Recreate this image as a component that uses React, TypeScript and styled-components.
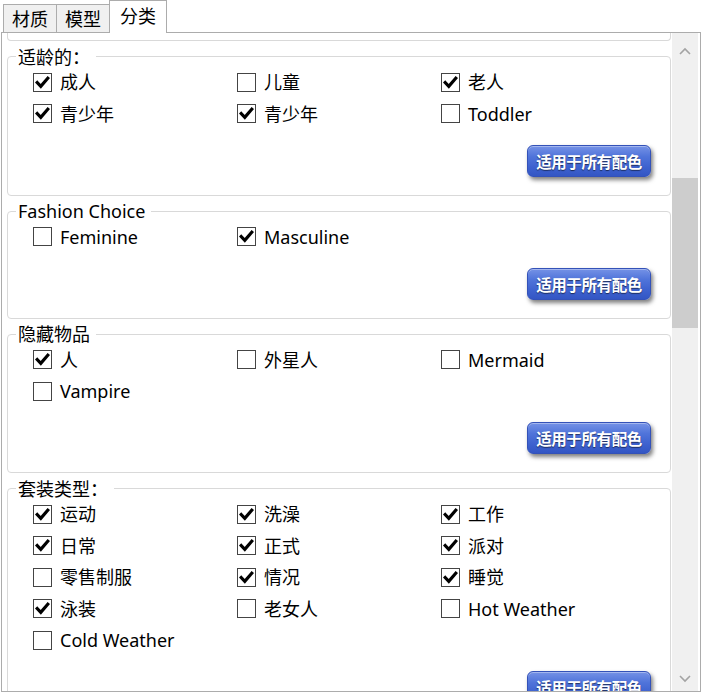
import React from 'react';
import styled, { createGlobalStyle } from 'styled-components';

const GlobalStyle = createGlobalStyle`
  html, body { margin: 0; padding: 0; background: #fff; }
  body { font-family: "Noto Sans", "Noto Sans CJK SC", sans-serif; color: #000; }
  * { box-sizing: border-box; }
`;

const Window = styled.div`
  width: 703px;
  height: 694px;
  overflow: hidden;
  background: #fff;
  display: flex;
  flex-direction: column;
`;

const TabStrip = styled.div`
  display: flex;
  align-items: flex-end;
  height: 32px;
  padding-left: 3px;
  flex-shrink: 0;
`;

const Tab = styled.div<{ $active?: boolean }>`
  height: ${p => (p.$active ? 33 : 28)}px;
  margin-bottom: ${p => (p.$active ? -1 : 0)}px;
  margin-right: -1px;
  padding: 0 ${p => (p.$active ? 10 : 8)}px ${p => (p.$active ? 2 : 0)}px;
  border: 1px solid #acacac;
  border-bottom: none;
  background: ${p => (p.$active ? '#fff' : '#f0f0f0')};
  position: relative;
  z-index: ${p => (p.$active ? 2 : 1)};
  display: flex;
  align-items: center;
  font-size: 18px;
  line-height: 20px;
  color: #000;
`;

const Panel = styled.div`
  margin-left: 1px;
  width: 700px;
  height: 660px;
  border: 1px solid #acacac;
  display: flex;
  flex-shrink: 0;
`;

const Content = styled.div`
  flex: 1;
  overflow: hidden;
  padding: 0 1px 0 5px;
  display: flex;
  flex-direction: column;
  gap: 5.5px;
`;

const GroupTail = styled.div`
  height: 8px;
  flex-shrink: 0;
  border: 1px solid #d9d9d9;
  border-top: none;
  border-radius: 0 0 4px 4px;
`;

const Group = styled.fieldset`
  margin: 0;
  min-width: 0;
  flex-shrink: 0;
  border: 1px solid #d9d9d9;
  border-radius: 4px;
  padding: 0 19px 18px 25px;
`;

const Legend = styled.legend`
  margin-left: -17px;
  padding: 0 6px 0 2px;
  font-size: 18px;
  line-height: 20px;
  color: #000;
`;

const OptionGrid = styled.div`
  display: grid;
  grid-template-columns: repeat(3, 204px);
  grid-auto-rows: 31.5px;
`;

const Option = styled.label`
  display: flex;
  align-items: center;
  gap: 8px;
  font-size: 18px;
  line-height: 20px;
  color: #000;
  white-space: nowrap;
`;

const Box = styled.span`
  width: 19px;
  height: 19px;
  border: 1px solid #444;
  background: #fff;
  display: flex;
  align-items: center;
  justify-content: center;
  flex-shrink: 0;
`;

const ButtonRow = styled.div`
  display: flex;
  justify-content: flex-end;
  margin-top: 15px;
`;

const ApplyButton = styled.div`
  width: 124px;
  height: 32px;
  border-radius: 6px;
  border: 1px solid #3452b8;
  background: linear-gradient(#7592e6 0%, #5074da 35%, #3e62cf 70%, #3356c4 100%);
  box-shadow: 2px 3px 4px rgba(0, 0, 0, 0.5), inset 0 1px 0 rgba(255, 255, 255, 0.35);
  color: #fff;
  font-family: "Noto Sans CJK SC", sans-serif;
  font-weight: 700;
  font-size: 15.5px;
  letter-spacing: -0.4px;
  display: flex;
  align-items: center;
  justify-content: center;
  text-shadow: 0 1px 1px rgba(0, 0, 0, 0.55);
  flex-shrink: 0;
`;

const ScrollBar = styled.div`
  width: 26px;
  margin-right: 2px;
  background: #f0f0f0;
  display: flex;
  flex-direction: column;
  flex-shrink: 0;
`;

const ArrowButton = styled.div<{ $h: number }>`
  height: ${p => p.$h}px;
  display: flex;
  align-items: center;
  justify-content: center;
  flex-shrink: 0;
`;

const Track = styled.div`
  flex: 1;
  display: flex;
  flex-direction: column;
`;

const Thumb = styled.div<{ $top: number; $h: number }>`
  margin-top: ${p => p.$top}px;
  height: ${p => p.$h}px;
  background: #cdcdcd;
`;

type Item = [string, boolean];
type GroupData = { title: string; items: Item[] };

const groups: GroupData[] = [
  {
    title: '适龄的：',
    items: [
      ['成人', true], ['儿童', false], ['老人', true],
      ['青少年', true], ['青少年', true], ['Toddler', false],
    ],
  },
  {
    title: 'Fashion Choice',
    items: [['Feminine', false], ['Masculine', true]],
  },
  {
    title: '隐藏物品',
    items: [['人', true], ['外星人', false], ['Mermaid', false], ['Vampire', false]],
  },
  {
    title: '套装类型：',
    items: [
      ['运动', true], ['洗澡', true], ['工作', true],
      ['日常', true], ['正式', true], ['派对', true],
      ['零售制服', false], ['情况', true], ['睡觉', true],
      ['泳装', true], ['老女人', false], ['Hot Weather', false],
      ['Cold Weather', false],
    ],
  },
];

const Check = () => (
  <svg width="15" height="15" viewBox="0 0 15 15">
    <path d="M2.2 7.6 L5.8 11.4 L12.8 3.2" fill="none" stroke="#000" strokeWidth="3.2" strokeLinecap="square" strokeLinejoin="miter" />
  </svg>
);

const Chevron = ({ up }: { up?: boolean }) => (
  <svg width="12" height="8" viewBox="0 0 12 8">
    <polyline
      points={up ? '1,7 6,2 11,7' : '1,1 6,6 11,1'}
      fill="none"
      stroke="#a3a3a3"
      strokeWidth="1.6"
    />
  </svg>
);

export default function App() {
  return (
    <Window>
      <GlobalStyle />
      <TabStrip>
        <Tab>材质</Tab>
        <Tab>模型</Tab>
        <Tab $active>分类</Tab>
      </TabStrip>
      <Panel>
        <Content>
          <GroupTail />
          {groups.map((g, gi) => (
            <Group key={gi}>
              <Legend>{g.title}</Legend>
              <OptionGrid>
                {g.items.map(([label, checked], i) => (
                  <Option key={i}>
                    <Box>{checked && <Check />}</Box>
                    {label}
                  </Option>
                ))}
              </OptionGrid>
              <ButtonRow>
                <ApplyButton>适用于所有配色</ApplyButton>
              </ButtonRow>
            </Group>
          ))}
        </Content>
        <ScrollBar>
          <ArrowButton $h={36}><Chevron up /></ArrowButton>
          <Track>
            <Thumb $top={109} $h={150} />
          </Track>
          <ArrowButton $h={24}><Chevron /></ArrowButton>
        </ScrollBar>
      </Panel>
    </Window>
  );
}
